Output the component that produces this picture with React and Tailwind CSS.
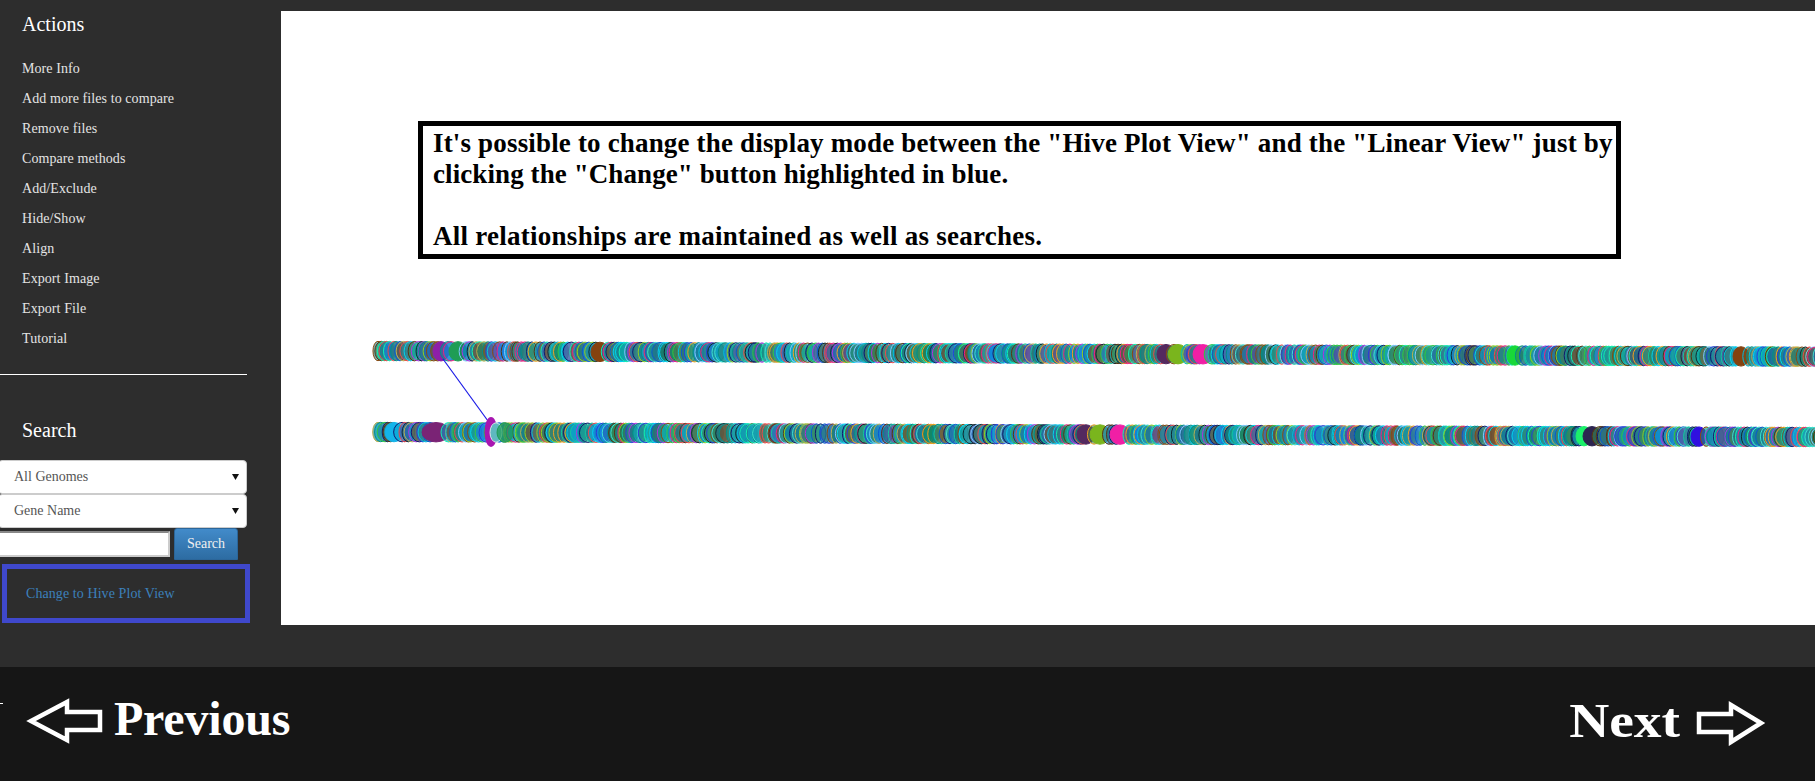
import React from 'react';

const actions = [
  'More Info',
  'Add more files to compare',
  'Remove files',
  'Compare methods',
  'Add/Exclude',
  'Hide/Show',
  'Align',
  'Export Image',
  'Export File',
  'Tutorial',
];

const strokes = ['#40e0d0', '#00d4f0', '#8fcf20', '#f04848', '#2a3cd8', '#10f0b0', '#b030e0', '#f0a020', '#80c8ff', '#5a3410', '#008f88', '#0a58d0', '#b8b050', '#00c0e0', '#30c840', '#f02080', '#101a70', '#10c8a0', '#102830', '#8a4a10'];
const fills = ['#1f8496', '#0f7a90', '#1a9a8a', '#08a8d0', '#2a7f70', '#1090c0', '#3a8a50', '#1f6a88', '#1080e0', '#4a7a4a', '#08b0b0', '#5a4aa0', '#108058', '#2068b0', '#7a4a20'];

// seeded so every render gives the same strip of genes
function makeRandom(seed) {
  let s = seed;
  return () => {
    s = (s + 0x6d2b79f5) | 0;
    let t = Math.imul(s ^ (s >>> 15), 1 | s);
    t = (t + Math.imul(t ^ (t >>> 7), 61 | t)) ^ t;
    return ((t ^ (t >>> 14)) >>> 0) / 4294967296;
  };
}

function makeGenes(seed, startY, endY, special) {
  const rand = makeRandom(seed);
  const genes = [];
  let x = 378;
  while (x < 1830) {
    const hit = special.find((g) => Math.abs(g.x - x) < 3);
    const y = startY + ((x - 372) / 1443) * (endY - startY);
    if (hit) {
      genes.push({ x: hit.x, y, rx: hit.rx, fill: hit.fill, stroke: hit.fill, solid: true });
      x = hit.x + hit.rx * 0.9;
    } else {
      genes.push({
        x,
        y,
        rx: 5 + rand() * 3.5,
        fill: fills[Math.floor(rand() * fills.length)],
        stroke: strokes[Math.floor(rand() * strokes.length)],
      });
      x += 2 + rand() * 2.4;
    }
  }
  return genes;
}

const topGenes = makeGenes(7, 351, 356.7, [
  { x: 441, rx: 8, fill: '#8e1fa8' },
  { x: 458, rx: 9, fill: '#1f9d55' },
  { x: 600, rx: 9, fill: '#85420f' },
  { x: 1166, rx: 9, fill: '#54295f' },
  { x: 1178, rx: 10, fill: '#7ab51d' },
  { x: 1203, rx: 10, fill: '#f01fa5' },
  { x: 1515, rx: 8, fill: '#18d838' },
  { x: 1741, rx: 8, fill: '#85420f' },
]);

const bottomGenes = makeGenes(23, 432, 437, [
  { x: 394, rx: 9, fill: '#14b4ea' },
  { x: 436, rx: 14, fill: '#7a2375' },
  { x: 1086, rx: 9, fill: '#54295f' },
  { x: 1100, rx: 10, fill: '#7ab51d' },
  { x: 1120, rx: 10, fill: '#f01fa5' },
  { x: 1584, rx: 8, fill: '#1cf06a' },
  { x: 1592, rx: 9, fill: '#2c2550' },
  { x: 1699, rx: 8, fill: '#3010e0' },
]);

function GeneStrip({ genes }) {
  return genes.map((g, i) => (
    <ellipse
      key={i}
      cx={g.x}
      cy={g.y}
      rx={g.rx}
      ry={9.7}
      fill={g.fill}
      fillOpacity={g.solid ? 1 : 0.62}
      stroke={g.stroke}
      strokeWidth="1"
    />
  ));
}

function LinearView() {
  return (
    <svg className="block mt-[71px]" width="1534" height="130" viewBox="281 330 1534 130">
      <GeneStrip genes={topGenes} />
      <GeneStrip genes={bottomGenes} />
      <line x1="443" y1="359" x2="488" y2="421" stroke="#1a1ae6" strokeWidth="1.2" />
      <ellipse cx="491" cy="432" rx="6.5" ry="15" fill="#a816b0" />
      <ellipse cx="496" cy="432.5" rx="6" ry="9.7" fill="#5fb8c0" stroke="#d8e8e8" strokeWidth="1" />
      <ellipse cx="505" cy="432.5" rx="8" ry="9.7" fill="#1f9d55" fillOpacity="0.7" stroke="#1f9d55" strokeWidth="1" />
    </svg>
  );
}

function GenomeSelect({ label }) {
  return (
    <div className="relative -ml-[2px] w-[249px] h-[34px] pl-[15px] bg-white border border-[#ccc] rounded flex items-center text-sm text-[#555]">
      {label}
      <svg className="absolute right-[7px] top-[13px]" width="7" height="6" viewBox="0 0 7 6">
        <polygon points="0,0 7,0 3.5,6" fill="#111" />
      </svg>
    </div>
  );
}

function Sidebar() {
  return (
    <aside className="w-[281px] shrink-0 overflow-hidden">
      <h2 className="mt-[10px] mb-[16px] pl-[22px] text-[20px] leading-[28px] text-white">Actions</h2>
      <ul>
        {actions.map((label) => (
          <li key={label} className="h-[30px] pl-[22px] flex items-center text-sm tracking-[0.08px] text-[#e4e4e4]">
            {label}
          </li>
        ))}
      </ul>
      <div className="mt-[20px] h-px w-[247px] bg-white" />
      <h2 className="mt-[41px] pl-[22px] text-[20px] leading-[28px] text-white">Search</h2>
      <div className="mt-[16px] flex flex-col">
        <GenomeSelect label="All Genomes" />
        <GenomeSelect label="Gene Name" />
      </div>
      <div className="flex items-center gap-[4px]">
        <input className="-ml-[10px] w-[180px] h-[26px] bg-white border-2 border-[#ccc] border-t-[#888] border-l-[#888]" />
        <button className="w-[64px] h-[32px] rounded-t-[3px] border border-[#2b669a] bg-gradient-to-b from-[#428bca] to-[#2d6ca2] text-sm text-[#f0f0f0]">
          Search
        </button>
      </div>
      <div className="mt-[4px] ml-[2px] w-[248px] h-[59px] border-[5px] border-[#3f48cc] pl-[19px] flex items-center text-sm tracking-[0.08px] text-[#3c80bb]">
        Change to Hive Plot View
      </div>
    </aside>
  );
}

function Footer() {
  return (
    <footer className="relative h-[114px] bg-[#161616] flex items-center justify-between pl-[26px] pr-[48px] font-bold text-[48px] text-white">
      <span className="absolute left-0 top-[36px] w-[3px] h-px bg-white" />
      <div className="flex items-center gap-[10px] pb-[6px]">
        <svg width="78" height="46" viewBox="26 698 78 46" fill="none" stroke="#fff" strokeWidth="4.5">
          <polygon points="31,721 67,702 67,712 100,712 100,730 67,730 67,740" />
        </svg>
        <span className="-mt-[4px] leading-[56px] tracking-[-0.2px]">Previous</span>
      </div>
      <div className="flex items-center gap-[15px] pb-[2px]">
        <span className="-mt-[4px] inline-block origin-right scale-x-[1.155] leading-[56px]">Next</span>
        <svg width="72" height="46" viewBox="1695 700 72 46" fill="none" stroke="#fff" strokeWidth="4.5">
          <polygon points="1699,714 1731,714 1731,705 1761,723 1731,742 1731,732 1699,732" />
        </svg>
      </div>
    </footer>
  );
}

export default function App() {
  return (
    <div className="h-[781px] overflow-hidden bg-[#2d2d2d] font-['Liberation_Serif',serif]">
      <div className="h-[667px] flex">
        <Sidebar />
        <main className="mt-[11px] h-[614px] flex-1 bg-white">
          <div className="mt-[110px] ml-[137px] w-[1203px] h-[138px] border-[5px] border-black pl-[10px] pt-[2px] text-[27px] leading-[31px] font-bold text-black whitespace-nowrap">
            <span className="tracking-[0.17px]">It's possible to change the display mode between the "Hive Plot View" and the "Linear View" just by</span>
            <br />
            <span className="tracking-[0.09px]">clicking the "Change" button highlighted in blue.</span>
            <br />
            <br />
            <span className="tracking-[0.26px]">All relationships are maintained as well as searches.</span>
          </div>
          <LinearView />
        </main>
      </div>
      <Footer />
    </div>
  );
}
